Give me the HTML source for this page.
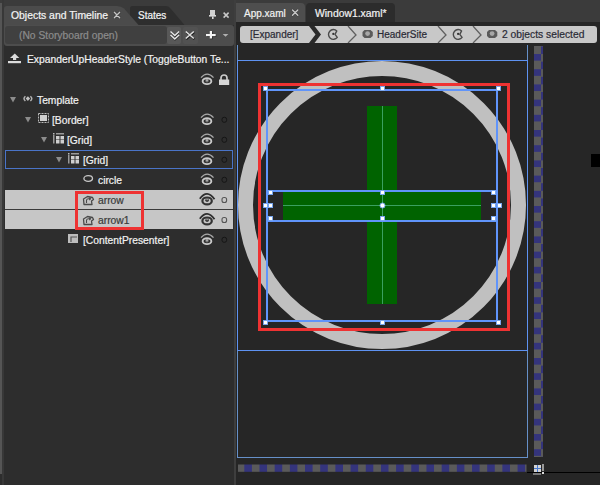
<!DOCTYPE html>
<html><head><meta charset="utf-8">
<style>
*{margin:0;padding:0;box-sizing:border-box}
html,body{width:600px;height:485px;overflow:hidden;background:#272727;font-family:"Liberation Sans",sans-serif;}
.a{position:absolute}
.t{position:absolute;white-space:nowrap;font-size:10.3px;line-height:12px;color:#f2f2f2;-webkit-text-stroke:0.2px currentColor}
</style></head><body>
<!-- LEFT PANEL -->
<div class="a" style="left:0;top:0;width:236px;height:485px;background:#2d2d2d"></div>
<div class="a" style="left:0;top:0;width:236px;height:25px;background:#3b3b3b"></div>
<div class="a" style="left:0;top:3px;width:2px;height:471px;background:#555"></div>
<div class="a" style="left:2px;top:0;width:2px;height:485px;background:#383838"></div>
<div class="a" style="left:234px;top:0;width:2px;height:485px;background:#3e3e3e"></div>
<!-- tabs -->
<svg class="a" style="left:0;top:0" width="236" height="26">
  <path d="M130 25 L130 8.5 Q130 6 132.5 6 L166 6 Q169 6 171 9 L184.5 25 Z" fill="#2e2e2e"/>
  <path d="M4 25 L4 9 Q4 6 7 6 L117 6 Q121 6 124 8.5 L138.5 25 Z" fill="#4b4b4b"/>
</svg>
<div class="t" style="left:11px;top:10px;font-size:10.4px;color:#f4f4f4">Objects and Timeline</div>
<svg class="a" style="left:108px;top:6px" width="20" height="16"><path d="M6.3 6.3 L11.7 11.7 M11.7 6.3 L6.3 11.7" stroke="#333" stroke-width="2.4" stroke-linecap="round"/><path d="M6.3 6.3 L11.7 11.7 M11.7 6.3 L6.3 11.7" stroke="#c4c4c4" stroke-width="1.4" stroke-linecap="round"/></svg>
<div class="t" style="left:138px;top:10px;font-size:10px;color:#f4f4f4">States</div>
<!-- pin & close -->
<svg class="a" style="left:206px;top:8px" width="30" height="16">
  <rect x="4" y="2" width="5" height="5" fill="#d0d0d0"/>
  <rect x="3" y="7" width="7" height="1.6" fill="#d8d8d8"/>
  <rect x="6" y="8.5" width="1.6" height="2.5" fill="#d8d8d8"/>
  <path d="M17.6 4.6 L22.6 9.6 M22.6 4.6 L17.6 9.6" stroke="#c8c8c8" stroke-width="1.5"/>
</svg>
<!-- storyboard row -->
<div class="a" style="left:4px;top:25px;width:230px;height:21px;background:#4d4d4d;border-radius:0 3px 3px 3px"></div>
<div class="a" style="left:5px;top:26px;width:162px;height:18px;background:#404040;border-radius:3px"></div>
<div class="t" style="left:19px;top:30px;font-size:10.3px;color:#8c8c8c">(No Storyboard open)</div>
<div class="a" style="left:167px;top:27px;width:14px;height:17px;background:#585858;border-radius:2px"></div>
<div class="a" style="left:183px;top:27px;width:15px;height:17px;background:#525252;border-radius:2px"></div>
<svg class="a" style="left:160px;top:20px" width="76" height="26">
  <path d="M11 12.2 L15 16.2 L19 12.2 M11 15.7 L15 19.7 L19 15.7" stroke="#1a1a1a" stroke-width="1.6" fill="none"/>
  <path d="M10.5 11.5 L14.8 15.5 L19.1 11.5 M10.5 15 L14.8 19 L19.1 15" stroke="#e8e8e8" stroke-width="1.4" fill="none"/>
  <path d="M26.3 12.2 L34.3 19.2 M34.3 12.2 L26.3 19.2" stroke="#1a1a1a" stroke-width="1.8"/>
  <path d="M25.8 11.5 L33.8 18.5 M33.8 11.5 L25.8 18.5" stroke="#e0e0e0" stroke-width="1.6"/>
  <rect x="46.5" y="14.7" width="9.7" height="2.2" fill="#1a1a1a"/>
  <rect x="50.3" y="11.7" width="2.2" height="7.5" fill="#1a1a1a"/>
  <rect x="46" y="14" width="9.7" height="2.2" fill="#f4f4f4"/>
  <rect x="49.8" y="11" width="2.2" height="7.5" fill="#f4f4f4"/>
  <path d="M62.7 14 L68.4 14 L65.5 16.8 Z" fill="#b0b0b0"/>
</svg>


<!-- tree rows -->
<svg class="a" style="left:0;top:50px" width="26" height="16">
  <path d="M10 8 L14.8 3.5 L19.3 8 Z" fill="#dcdcdc"/>
  <rect x="13" y="7.5" width="3.2" height="2.5" fill="#dcdcdc"/>
  <rect x="8" y="11" width="13" height="2.2" fill="#dcdcdc"/>
</svg>
<div class="t" style="left:27px;top:54px">ExpanderUpHeaderStyle (ToggleButton Te...</div>

<defs></defs>
<!-- eye + lock row -->
<svg class="a" style="left:200px;top:72px" width="32" height="16">
  <path d="M1 5.6 Q7 -1.5 13.5 5.6" stroke="#a8a8a8" stroke-width="1.3" fill="none"/>
  <ellipse cx="7" cy="9.2" rx="4.35" ry="2.9" fill="none" stroke="#c8c8c8" stroke-width="1.9"/>
  <circle cx="7" cy="8.8" r="1.7" fill="#7a7a7a"/>
  <circle cx="7" cy="8.1" r="0.8" fill="#cfcfcf"/>
  <path d="M21 8 V6 A3 3 0 0 1 27 6 V8" stroke="#cccccc" stroke-width="1.7" fill="none"/>
  <rect x="19" y="7.5" width="10.2" height="5.5" fill="#d6d6d6"/>
</svg>

<!-- Template -->
<svg class="a" style="left:10px;top:97px" width="7" height="6"><path d="M0 0 L6 0 L3 5.5Z" fill="#8c8c8c"/></svg>
<svg class="a" style="left:21.5px;top:95px" width="12" height="8">
  <path d="M3.4 1.2 Q0.6 3.6 3.4 6 M8.4 1.2 Q11.2 3.6 8.4 6" stroke="#b4b4b4" stroke-width="1.5" fill="none"/>
  <path d="M5.9 1.2 L8.1 3.6 L5.9 6 L3.7 3.6Z" fill="#c0c0c0"/>
</svg>
<div class="t" style="left:37px;top:95px">Template</div>

<!-- Border -->
<svg class="a" style="left:25px;top:117px" width="7" height="6"><path d="M0 0 L6 0 L3 5.5Z" fill="#8c8c8c"/></svg>
<svg class="a" style="left:38px;top:113px" width="11" height="10">
  <rect x="0.5" y="0.5" width="10" height="9" fill="none" stroke="#bbb" stroke-dasharray="2 1"/>
  <rect x="2" y="2" width="7" height="6" fill="#cfcfcf"/>
</svg>
<div class="t" style="left:52px;top:115px">[Border]</div>

<!-- Grid -->
<svg class="a" style="left:41px;top:137px" width="7" height="6"><path d="M0 0 L6 0 L3 5.5Z" fill="#8c8c8c"/></svg>
<svg class="a" style="left:53px;top:133px" width="12" height="11">
  <rect x="3" y="0" width="8" height="1.5" fill="#9a9a9a"/>
  <rect x="0" y="0" width="1.5" height="1.5" fill="#bbb"/>
  <rect x="0" y="2" width="1.5" height="8.5" fill="#9a9a9a"/>
  <rect x="3" y="3" width="3.5" height="3.5" fill="#cfcfcf"/>
  <rect x="7.5" y="3" width="3.5" height="3.5" fill="#cfcfcf"/>
  <rect x="3" y="7" width="3.5" height="3.5" fill="#cfcfcf"/>
  <rect x="7.5" y="7" width="3.5" height="3.5" fill="#cfcfcf"/>
</svg>
<div class="t" style="left:67px;top:135px">[Grid]</div>

<!-- Grid selected -->
<div class="a" style="left:5px;top:150px;width:228px;height:19px;border:1px solid #4a74c8"></div>
<svg class="a" style="left:56px;top:157px" width="7" height="6"><path d="M0 0 L6 0 L3 5.5Z" fill="#8c8c8c"/></svg>
<svg class="a" style="left:68px;top:153px" width="12" height="11">
  <rect x="3" y="0" width="8" height="1.5" fill="#9a9a9a"/>
  <rect x="0" y="0" width="1.5" height="1.5" fill="#bbb"/>
  <rect x="0" y="2" width="1.5" height="8.5" fill="#9a9a9a"/>
  <rect x="3" y="3" width="3.5" height="3.5" fill="#cfcfcf"/>
  <rect x="7.5" y="3" width="3.5" height="3.5" fill="#cfcfcf"/>
  <rect x="3" y="7" width="3.5" height="3.5" fill="#cfcfcf"/>
  <rect x="7.5" y="7" width="3.5" height="3.5" fill="#cfcfcf"/>
</svg>
<div class="t" style="left:83px;top:155px">[Grid]</div>

<!-- circle -->
<svg class="a" style="left:82px;top:174px" width="12" height="9"><ellipse cx="6.2" cy="4.5" rx="4.3" ry="2.8" fill="none" stroke="#c8c8c8" stroke-width="1.3"/></svg>
<div class="t" style="left:98px;top:175px">circle</div>

<!-- arrow rows highlighted -->
<div class="a" style="left:5px;top:190px;width:228px;height:19px;background:#c6c6c6"></div>
<div class="a" style="left:5px;top:209px;width:228px;height:1px;background:#3a3a3a"></div>
<div class="a" style="left:5px;top:210px;width:228px;height:19px;background:#c6c6c6"></div>
<svg class="a" style="left:82px;top:194.5px" width="13" height="12">
  <path d="M1.5 4 L5.5 1.5 L10.5 2.5 L11.5 4.5 L9.5 6 L10 9.5 L2 9.5 Z" fill="none" stroke="#4a4a4a" stroke-width="1.3" stroke-linejoin="round"/>
  <path d="M4.5 8 L4.5 5.5 Q4.5 3.8 6.5 3.8 L8.5 3.8 M7.3 2.6 L8.6 3.8 L7.3 5" stroke="#4a4a4a" stroke-width="1.1" fill="none"/>
</svg>
<div class="t" style="left:98px;top:195px;color:#3a3a3a">arrow</div>
<svg class="a" style="left:82px;top:214.5px" width="13" height="12">
  <path d="M1.5 4 L5.5 1.5 L10.5 2.5 L11.5 4.5 L9.5 6 L10 9.5 L2 9.5 Z" fill="none" stroke="#4a4a4a" stroke-width="1.3" stroke-linejoin="round"/>
  <path d="M4.5 8 L4.5 5.5 Q4.5 3.8 6.5 3.8 L8.5 3.8 M7.3 2.6 L8.6 3.8 L7.3 5" stroke="#4a4a4a" stroke-width="1.1" fill="none"/>
</svg>
<div class="t" style="left:98px;top:215px;color:#3a3a3a">arrow1</div>
<!-- red annotation -->
<div class="a" style="left:75px;top:191px;width:69px;height:39px;border:3px solid #ee3232"></div>

<!-- ContentPresenter -->
<svg class="a" style="left:68px;top:234px" width="11" height="10">
  <rect x="0" y="0" width="10" height="9" fill="#bdbdbd"/>
  <path d="M3 8 L3 3 L9 3" stroke="#555" stroke-width="1.2" fill="none"/>
</svg>
<div class="t" style="left:83px;top:235px">[ContentPresenter]</div>

<!-- eyes in rows -->
<svg class="a" style="left:200px;top:110px" width="32" height="140">
  <defs>
    <g id="eye">
      <path d="M1 5.6 Q7 -1.5 13.5 5.6" stroke="#a8a8a8" stroke-width="1.3" fill="none"/>
      <ellipse cx="7" cy="9.2" rx="4.35" ry="2.9" fill="none" stroke="#c8c8c8" stroke-width="1.9"/>
      <circle cx="7" cy="8.8" r="1.7" fill="#7a7a7a"/>
      <circle cx="7" cy="8.1" r="0.8" fill="#cfcfcf"/>
    </g>
    <g id="dot"><rect x="22" y="7.3" width="4.6" height="5" rx="2" fill="none" stroke="#151515" stroke-width="1"/></g>
  </defs>
  <use href="#eye" y="2"/><use href="#dot" y="0"/>
  <use href="#eye" y="22"/><use href="#dot" y="20"/>
  <use href="#eye" y="42"/><use href="#dot" y="40"/>
  <use href="#eye" y="62"/><use href="#dot" y="60"/>
  <use href="#eye" y="122"/><use href="#dot" y="120"/>
</svg>
<svg class="a" style="left:198px;top:190px" width="34" height="40">
  <g id="deye">
    <path d="M1.8 8.8 Q9 -1.2 16.5 9.2" stroke="#2e2e2e" stroke-width="1.8" fill="none"/>
    <ellipse cx="9.1" cy="10.9" rx="4.7" ry="3.4" fill="none" stroke="#333" stroke-width="2.2"/>
    <circle cx="9.1" cy="10.2" r="1.8" fill="#3a3a3a"/>
    <circle cx="9.1" cy="9.5" r="0.8" fill="#aaa"/>
    <rect x="24" y="7.5" width="4.6" height="5" rx="2" fill="none" stroke="#555" stroke-width="1.1"/>
  </g>
  <use href="#deye" y="20"/>
</svg>

<!-- RIGHT: DOCUMENT -->
<div class="a" style="left:236px;top:0;width:364px;height:22px;background:#3b3b3b"></div>
<div class="a" style="left:236px;top:22px;width:364px;height:463px;background:#262626"></div>
<div class="a" style="left:236px;top:3px;width:69px;height:19px;background:#4e4e4e;border-radius:0 4px 0 0"></div>
<div class="t" style="left:244px;top:8px;font-size:10px">App.xaml</div>
<svg class="a" style="left:286px;top:4px" width="20" height="16"><path d="M6.5 6 L11.8 11.2 M11.8 6 L6.5 11.2" stroke="#3a3a3a" stroke-width="2.4" stroke-linecap="round"/><path d="M6.5 6 L11.8 11.2 M11.8 6 L6.5 11.2" stroke="#c8c8c8" stroke-width="1.4" stroke-linecap="round"/></svg>
<div class="a" style="left:306px;top:3px;width:89px;height:19px;background:#2c2c2c;border-radius:4px 4px 0 0"></div>
<div class="t" style="left:315px;top:8px;font-size:10.4px">Window1.xaml*</div>

<!-- breadcrumb -->
<div class="a" style="left:240px;top:26px;width:357px;height:17px;background:#c8c8c8;border-radius:3px"></div>
<svg class="a" style="left:240px;top:26px" width="357" height="17">
  <path d="M69 0 L74.5 0 L81 8.5 L74.5 17 L69 17 L75.5 8.5 Z" fill="#2a2a2a"/>
  <path d="M108 0 L116 9 L108 17" stroke="#606060" stroke-width="1.3" fill="none"/>
  <path d="M198 0 L206 9 L198 17" stroke="#606060" stroke-width="1.3" fill="none"/>
  <path d="M233 0 L241 9 L233 17" stroke="#606060" stroke-width="1.3" fill="none"/>
  <g stroke="#4a4a4a" stroke-width="1.4" fill="none" stroke-linejoin="round">
    <path d="M96.8 4.9 A4.9 4.9 0 1 0 97.3 11.4 L95 8.4 Z"/>
    <path d="M221.6 4.9 A4.9 4.9 0 1 0 222.1 11.4 L219.8 8.4 Z"/>
  </g>
  <circle cx="93.3" cy="7.9" r="1.1" fill="#333"/>
  <circle cx="218.1" cy="7.9" r="1.1" fill="#333"/>
  <path d="M122.5 6 L124.5 4 L130.5 4 L132.8 6 L132.8 10 L130.5 12 L124.5 12 L122.5 10 Z" fill="#5a5a5a"/>
  <circle cx="127.6" cy="7.6" r="2.4" fill="#a6a6a6"/>
  <path d="M247 6 L249 4 L255 4 L257.3 6 L257.3 10 L255 12 L249 12 L247 10 Z" fill="#5a5a5a"/>
  <circle cx="252.1" cy="7.6" r="2.4" fill="#a6a6a6"/>
</svg>
<div class="t" style="left:250px;top:29px;font-size:10px;color:#2a2a35">[Expander]</div>
<div class="t" style="left:377px;top:29px;font-size:10px;color:#2a2a35">HeaderSite</div>
<div class="t" style="left:502px;top:29px;font-size:10.3px;color:#2a2a35">2 objects selected</div>

<!-- artboard & canvas -->
<svg class="a" style="left:0;top:0" width="600" height="485" shape-rendering="crispEdges">
  <circle cx="382" cy="205" r="136.5" fill="none" stroke="#c0c0c0" stroke-width="15" shape-rendering="geometricPrecision"/>
  <!-- green cross -->
  <rect x="367" y="106" width="30" height="198" fill="#006300"/>
  <rect x="283" y="191" width="198" height="29" fill="#006300"/>
  <rect x="382" y="106" width="1" height="198" fill="#3aa060"/>
  <rect x="283" y="205" width="198" height="1" fill="#3aa060"/>
  <!-- artboard -->
  <g fill="#6690c8">
    <rect x="237" y="45" width="1" height="413"/>
    <rect x="527" y="45" width="1" height="413"/>
    <rect x="237" y="457" width="291" height="1"/>
  </g>
  <g fill="#5e92f2">
    <rect x="237" y="60" width="1" height="291"/>
    <rect x="527" y="60" width="1" height="291"/>
    <rect x="237" y="60" width="291" height="1"/>
    <rect x="237" y="350" width="291" height="1"/>
  </g>
  <!-- red annotation -->
  <g fill="#ee3232">
    <rect x="258" y="83" width="252" height="3"/>
    <rect x="258" y="328" width="252" height="3"/>
    <rect x="258" y="83" width="3" height="248"/>
    <rect x="507" y="83" width="3" height="248"/>
  </g>
  <!-- selection -->
  <g fill="#6094fa">
    <rect x="266" y="89" width="232" height="2"/>
    <rect x="266" y="320" width="232" height="2"/>
    <rect x="266" y="89" width="2" height="233"/>
    <rect x="496" y="89" width="2" height="233"/>
    <rect x="266" y="190" width="232" height="2"/>
    <rect x="266" y="220" width="232" height="2"/>
  </g>
  <g fill="#fff" stroke="#7aa6ee" stroke-width="1">
    <rect x="263.5" y="86.5" width="4" height="4"/>
    <rect x="380.5" y="86.5" width="4" height="4"/>
    <rect x="496.5" y="86.5" width="4" height="4"/>
    <rect x="263.5" y="320.5" width="4" height="4"/>
    <rect x="380.5" y="320.5" width="4" height="4"/>
    <rect x="496.5" y="320.5" width="4" height="4"/>
    <rect x="263.5" y="203.5" width="4" height="4"/>
    <rect x="497.5" y="203.5" width="4" height="4"/>
    <rect x="268.5" y="190.5" width="4" height="4"/>
    <rect x="268.5" y="203.5" width="4" height="4"/>
    <rect x="268.5" y="216.5" width="4" height="4"/>
    <rect x="491.5" y="190.5" width="4" height="4"/>
    <rect x="491.5" y="203.5" width="4" height="4"/>
    <rect x="491.5" y="216.5" width="4" height="4"/>
    <rect x="380.5" y="190.5" width="4" height="4"/>
    <rect x="380.5" y="216.5" width="4" height="4"/>
    <circle cx="382.5" cy="205.5" r="2.5" shape-rendering="geometricPrecision"/>
  </g>
  <!-- dashed strips -->
  <defs>
    <pattern id="pv" patternUnits="userSpaceOnUse" x="534" y="54" width="9" height="15.2">
      <rect x="0" y="0" width="7" height="7" fill="#34347c"/>
      <rect x="0" y="7" width="7" height="8.2" fill="#5a5a5a"/>
      <rect x="7" y="0" width="2" height="7.5" fill="#5a5a5a"/>
      <rect x="7" y="7.5" width="2" height="7.7" fill="#34347c"/>
    </pattern>
    <pattern id="ph" patternUnits="userSpaceOnUse" x="244.3" y="464" width="15.18" height="8">
      <rect x="0" y="0" width="7.8" height="8" fill="#34347c"/>
      <rect x="7.8" y="0" width="7.38" height="8" fill="#5a5a5a"/>
    </pattern>
  </defs>
  <rect x="534" y="46" width="9" height="411" fill="url(#pv)"/>
  <rect x="238" y="464.5" width="288.5" height="7.3" fill="url(#ph)" shape-rendering="geometricPrecision"/>
  <!-- corner widget -->
  <rect x="527" y="472" width="73" height="1" fill="#000"/>
  <rect x="534" y="465" width="7" height="7" fill="#d4d4d4"/>
  <rect x="537" y="465" width="1" height="7" fill="#4a7ad0"/>
  <rect x="534" y="468" width="7" height="1" fill="#4a7ad0"/>
  <rect x="533" y="473" width="8" height="2" fill="#777"/>
  <rect x="542" y="464" width="2" height="7" fill="#999"/>
  <rect x="542" y="472" width="2" height="2" fill="#ddd"/>
  <rect x="591" y="154" width="9" height="13" fill="#000"/>
</svg>
</body></html>
